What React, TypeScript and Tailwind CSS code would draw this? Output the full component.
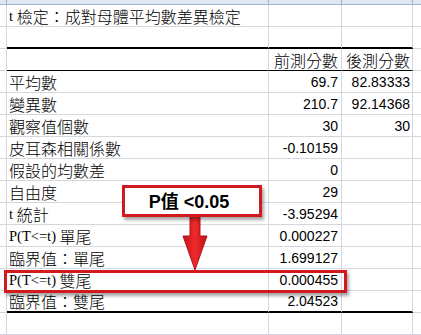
import React from "react";

const CJK = "font-['Noto_Sans_CJK_TC',sans-serif]";
const NUM = "font-['Liberation_Sans',sans-serif]";
const SER = "font-['Liberation_Serif',serif]";

type RowProps = {
  a?: React.ReactNode;
  b?: React.ReactNode;
  c?: React.ReactNode;
  bottom?: "grid" | "thin" | "thick";
};

function Row({ a, b, c, bottom = "grid" }: RowProps) {
  const bb =
    bottom === "thick"
      ? "border-b-2 border-b-black"
      : bottom === "thin"
      ? "border-b border-b-black"
      : "border-b border-b-[#d4d8de]";
  return (
    <div className="flex h-[22px]">
      <div className="w-[7px] shrink-0 border-r border-b border-[#d4d8de]" />
      <div
        className={`w-[262px] shrink-0 border-r border-r-[#d4d8de] ${bb} flex items-end pl-[2px] pb-[1px] text-[16px] leading-[17px] text-black whitespace-nowrap`}
      >
        {a}
      </div>
      <div
        className={`w-[73px] shrink-0 border-r border-r-[#d4d8de] ${bb} flex items-end justify-end pr-[3px] pb-[1px] text-[16px] leading-[17px] text-black whitespace-nowrap`}
      >
        {b}
      </div>
      <div
        className={`w-[71px] shrink-0 border-r border-r-[#d4d8de] ${bb} flex items-end justify-end pr-[2px] pb-[1px] text-[16px] leading-[17px] text-black whitespace-nowrap`}
      >
        {c}
      </div>
      <div className="flex-1 border-b border-[#d4d8de]" />
    </div>
  );
}

const C = ({ children }: { children: React.ReactNode }) => (
  <span className={`${CJK} font-light text-[16px] leading-[17px]`}>{children}</span>
);
const N = ({ children }: { children: React.ReactNode }) => (
  <span className={`${NUM} text-[14px] leading-[17px]`}>{children}</span>
);
const S = ({ children }: { children: React.ReactNode }) => (
  <span className={`${SER} text-[14.5px] leading-[17px]`}>{children}</span>
);

export default function App() {
  return (
    <div className="relative w-[421px] h-[335px] bg-white overflow-hidden">
      {/* column header strip */}
      <div className="flex h-[5px] bg-[#dfe8f3] border-b border-[#9eb6ce] overflow-hidden">
        <div className="w-[7px] shrink-0 border-r border-[#9eb6ce]" />
        <div className="w-[262px] shrink-0 border-r border-[#9eb6ce] text-center">
          <span className={`${NUM} block text-[11px] leading-[11px] -mt-[9px] text-[#27415f]`}>A</span>
        </div>
        <div className="w-[73px] shrink-0 border-r border-[#9eb6ce] text-center">
          <span className={`${NUM} block text-[11px] leading-[11px] -mt-[9px] text-[#27415f]`}>B</span>
        </div>
        <div className="w-[71px] shrink-0 border-r border-[#9eb6ce] text-center">
          <span className={`${NUM} block text-[11px] leading-[11px] -mt-[9px] text-[#27415f]`}>C</span>
        </div>
        <div className="flex-1" />
      </div>

      <Row
        a={
          <>
            <S>t&nbsp;</S>
            <C>檢定：成對母體平均數差異檢定</C>
          </>
        }
      />
      <Row bottom="thick" />
      <Row bottom="thin" b={<C>前測分數</C>} c={<C>後測分數</C>} />
      <Row a={<C>平均數</C>} b={<N>69.7</N>} c={<N>82.83333</N>} />
      <Row a={<C>變異數</C>} b={<N>210.7</N>} c={<N>92.14368</N>} />
      <Row a={<C>觀察值個數</C>} b={<N>30</N>} c={<N>30</N>} />
      <Row a={<C>皮耳森相關係數</C>} b={<N>-0.10159</N>} />
      <Row a={<C>假設的均數差</C>} b={<N>0</N>} />
      <Row a={<C>自由度</C>} b={<N>29</N>} />
      <Row
        a={
          <>
            <S>t&nbsp;</S>
            <C>統計</C>
          </>
        }
        b={<N>-3.95294</N>}
      />
      <Row
        a={
          <>
            <S>P(T&lt;=t)&nbsp;</S>
            <C>單尾</C>
          </>
        }
        b={<N>0.000227</N>}
      />
      <Row a={<C>臨界值：單尾</C>} b={<N>1.699127</N>} />
      <Row
        a={
          <>
            <S>P(T&lt;=t)&nbsp;</S>
            <C>雙尾</C>
          </>
        }
        b={<N>0.000455</N>}
      />
      <Row bottom="thick" a={<C>臨界值：雙尾</C>} b={<N>2.04523</N>} />
      <Row />

      {/* red highlight box around the two-tailed row */}
      <div className="absolute left-[4px] top-[270px] w-[343px] h-[23px] border-[3px] border-[#d2191d] shadow-[2px_3px_3px_rgba(0,0,0,0.35)]" />

      {/* arrow */}
      <svg
        className="absolute left-[181px] top-[214px]"
        width="28"
        height="58"
        viewBox="0 0 28 58"
      >
        <defs>
          <linearGradient id="ag" x1="0" x2="1" y1="0" y2="0">
            <stop offset="0" stopColor="#c0141a" />
            <stop offset="0.5" stopColor="#f02a2a" />
            <stop offset="1" stopColor="#b81218" />
          </linearGradient>
        </defs>
        <path
          d="M9 0 H19 V22 H26 L14 56 L2 22 H9 Z"
          fill="url(#ag)"
          stroke="#b3141a"
          strokeWidth="1"
          strokeLinejoin="round"
        />
      </svg>

      {/* callout box */}
      <div className="absolute left-[122px] top-[185px] w-[140px] h-[32px] border-[3px] border-[#d2191d] bg-white shadow-[2px_3px_3px_rgba(0,0,0,0.35)] flex items-center justify-center pr-[6px]">
        <span className="text-[18px] leading-none font-bold text-black whitespace-nowrap">
          <span className={NUM}>P</span>
          <span className={CJK}>值</span>
          <span className={NUM}> &lt;0.05</span>
        </span>
      </div>
    </div>
  );
}
